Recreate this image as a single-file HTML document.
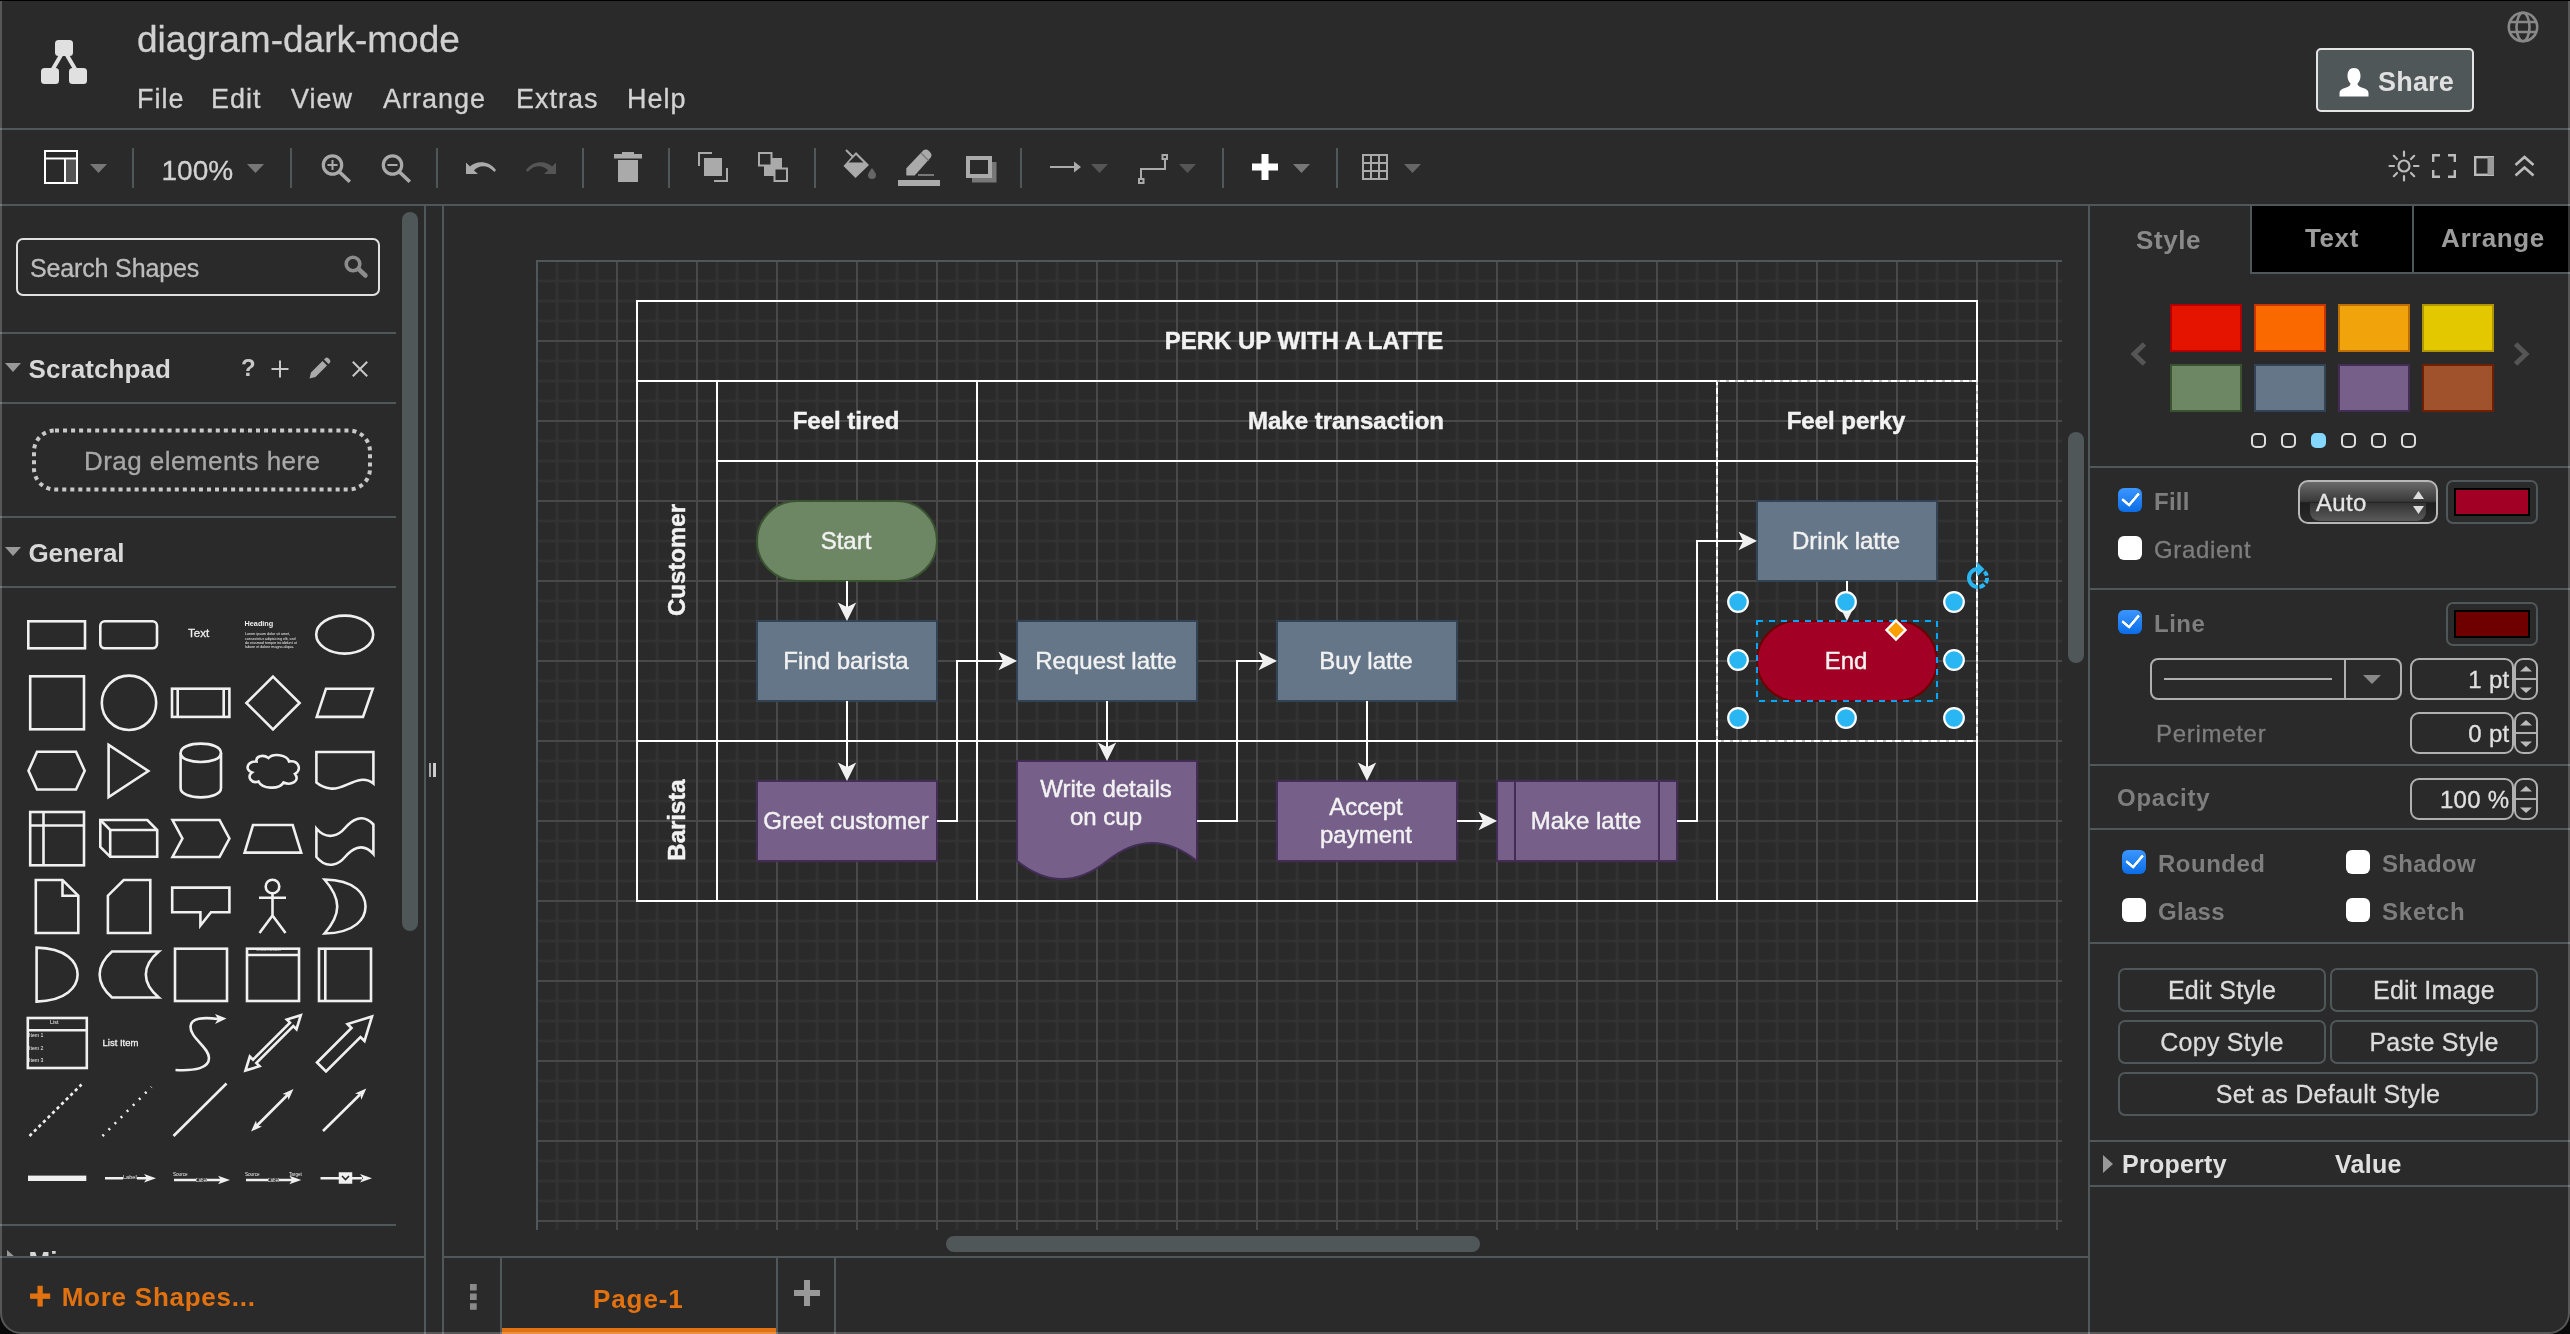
<!DOCTYPE html>
<html lang="en">
<head>
<meta charset="utf-8">
<title>diagram-dark-mode</title>
<style>
*{box-sizing:border-box;margin:0;padding:0}
html,body{width:2570px;height:1334px;overflow:hidden;background:#2a2a2a}
body{font-family:"Liberation Sans",sans-serif;color:#cfcfcf;position:relative;-webkit-text-stroke:.3px}
#root{will-change:transform;position:absolute;left:0;top:0;width:2570px;height:1334px;background:#2a2a2a;overflow:hidden}
.abs{position:absolute}
.hl{position:absolute;height:2px;background:#505759}
.vl{position:absolute;width:2px;background:#505759}
.t{position:absolute;white-space:nowrap;line-height:1}
.tiny{-webkit-text-stroke:0}
.menu{font-size:27px;color:#d2d2d2;top:85.5px;letter-spacing:1px}
.sep{position:absolute;width:2px;top:148px;height:40px;background:#505759}
svg{position:absolute;overflow:visible}

.cb{position:absolute;width:24px;height:24px;border-radius:6px;background:#fff}
.cb.on{background:linear-gradient(#3c96ff,#0a6de6)}
.cb.on:after{content:"";position:absolute;left:4px;top:4px;width:13.5px;height:7.5px;border-left:3.6px solid #fff;border-bottom:3.6px solid #fff;transform:rotate(-50deg);transform-origin:50% 50%;border-radius:1.5px}
.fl{position:absolute;white-space:nowrap;line-height:1;font-size:24px;color:#7e7e7e}
.fb{font-weight:bold;-webkit-text-stroke:0}
.btn{position:absolute;height:44px;border:2px solid #505759;border-radius:7px;color:#dcdcdc;font-size:25px;line-height:40px;text-align:center;letter-spacing:.25px}
.inp{position:absolute;left:2410px;width:104px;height:42px;border:2px solid #b0b0b0;border-radius:9px;color:#e0e0e0;font-size:24px;line-height:40px;text-align:right;padding-right:2.5px;white-space:nowrap;letter-spacing:.3px}
.spin{position:absolute;left:2514px;width:24px;height:42px;border:2px solid #b0b0b0;border-radius:9px}
.spin:before{content:"";position:absolute;left:0;top:18px;width:20px;height:2px;background:#b0b0b0}
.sw{position:absolute;width:72px;height:48px;border:2px solid}
.colbtn{position:absolute;left:2446px;width:92px;height:44px;border:2px solid #505759;border-radius:7px}
.colbtn i{position:absolute;left:6px;top:6px;width:76px;height:28px;border:2px solid #000}
.dot{position:absolute;top:433px;width:15px;height:15px;border:2px solid #ddd;border-radius:5px}

</style>
</head>
<body>
<div id="root">
<!-- window edges -->
<div class="abs" style="left:0;top:0;width:2570px;height:1px;background:#000"></div>

<!-- HEADER -->
<div id="header">
<div class="t" style="left:137px;top:21px;font-size:37px;color:#d0d0d0">diagram-dark-mode</div>
<div class="t menu" style="left:137px">File</div>
<div class="t menu" style="left:211px">Edit</div>
<div class="t menu" style="left:291px">View</div>
<div class="t menu" style="left:383px">Arrange</div>
<div class="t menu" style="left:516px">Extras</div>
<div class="t menu" style="left:627px">Help</div>

<!-- logo -->
<svg style="left:40px;top:40px" width="48" height="44" viewBox="0 0 48 44"><path d="M24 10L10 34M24 10L38 34" stroke="#e0e0e0" stroke-width="4"/><rect x="15" y="0" width="18" height="16" rx="3.5" fill="#e0e0e0"/><rect x="1" y="28" width="18" height="16" rx="3.5" fill="#e0e0e0"/><rect x="29" y="28" width="18" height="16" rx="3.5" fill="#e0e0e0"/></svg>
<!-- globe -->
<svg style="left:2507px;top:11px" width="32" height="32" viewBox="0 0 32 32"><g fill="none" stroke="#888" stroke-width="2.6"><circle cx="16" cy="16" r="14.2"/><ellipse cx="16" cy="16" rx="6.5" ry="14.2"/><path d="M2 11H30M2 21H30"/></g></svg>
<!-- share -->
<div class="abs" style="left:2316px;top:48px;width:158px;height:64px;background:#505759;border:2px solid #e4e4e4;border-radius:5px"></div>
<svg style="left:2339px;top:67px" width="30" height="30" viewBox="0 0 30 30"><path d="M15 1C19.5 1 21.5 4.5 21.5 9C21.5 12.5 20 15 18.5 16.5C18.5 19 21 20 24 21C27.5 22 29.5 23.5 29.5 26V29.5H0.5V26C0.5 23.5 2.5 22 6 21C9 20 11.5 19 11.5 16.5C10 15 8.5 12.5 8.5 9C8.5 4.5 10.5 1 15 1Z" fill="#fff"/></svg>
<div class="t" style="left:2378px;top:69px;font-size:27px;font-weight:bold;-webkit-text-stroke:0;color:#e0e0e0;letter-spacing:.2px">Share</div>

</div>
<div class="hl" style="left:0;top:128px;width:2570px"></div>

<!-- TOOLBAR -->
<div id="toolbar">

<!-- sidebar/format toggle icon -->
<svg style="left:44px;top:150px" width="34" height="34" viewBox="0 0 34 34"><rect x="1" y="1" width="32" height="32" fill="none" stroke="#fff" stroke-width="2"/><rect x="22" y="9" width="10" height="23" fill="#555"/><path d="M1 8.5H33M21 8.5V33" stroke="#fff" stroke-width="2" fill="none"/></svg>
<svg style="left:90px;top:164px" width="17" height="9" viewBox="0 0 17 9"><path d="M0 0H17L8.5 9Z" fill="#777"/></svg>
<div class="sep" style="left:132px"></div>
<div class="t" style="left:161.5px;top:157px;font-size:28px;color:#d2d2d2">100%</div>
<svg style="left:247px;top:164px" width="17" height="9" viewBox="0 0 17 9"><path d="M0 0H17L8.5 9Z" fill="#777"/></svg>
<div class="sep" style="left:290px"></div>
<!-- zoom in -->
<svg style="left:321px;top:153px" width="30" height="30" viewBox="0 0 30 30"><circle cx="11.5" cy="12" r="9.2" fill="none" stroke="#aaa" stroke-width="3.2"/><path d="M18.5 19L27.5 27.5" stroke="#aaa" stroke-width="3.6" stroke-linecap="square"/><path d="M6.5 12H16.5M11.5 7V17" stroke="#aaa" stroke-width="2"/></svg>
<!-- zoom out -->
<svg style="left:381px;top:153px" width="30" height="30" viewBox="0 0 30 30"><circle cx="11.5" cy="12" r="9.2" fill="none" stroke="#aaa" stroke-width="3.2"/><path d="M18.5 19L27.5 27.5" stroke="#aaa" stroke-width="3.6" stroke-linecap="square"/><path d="M6.5 12H16.5" stroke="#aaa" stroke-width="2"/></svg>
<div class="sep" style="left:436px"></div>
<!-- undo -->
<svg style="left:466px;top:160px" width="30" height="15" viewBox="0 0 30 15"><path d="M0 2.5V14H12L8 10.5C12 5.5 21 3.5 28.5 12L30 10C23 0 9.5 0.5 4 6.5Z" fill="#aaa"/></svg>
<!-- redo -->
<svg style="left:526px;top:160px" width="30" height="15" viewBox="0 0 30 15"><path d="M30 2.5V14H18L22 10.5C18 5.5 9 3.5 1.5 12L0 10C7 0 20.5 0.5 26 6.5Z" fill="#555"/></svg>
<div class="sep" style="left:582px"></div>
<!-- delete -->
<svg style="left:614px;top:152px" width="28" height="30" viewBox="0 0 28 30"><path d="M8 0H20V2H28V6.5H0V2H8ZM4 8H24V30H4Z" fill="#aaa"/></svg>
<div class="sep" style="left:668px"></div>
<!-- to front -->
<svg style="left:698px;top:152px" width="30" height="30" viewBox="0 0 30 30"><rect x="6" y="6" width="18" height="18" fill="#aaa"/><path d="M14 1H1V14M16 29H29V16" fill="none" stroke="#aaa" stroke-width="2"/></svg>
<!-- to back -->
<svg style="left:758px;top:152px" width="30" height="30" viewBox="0 0 30 30"><rect x="6" y="6" width="18" height="18" fill="#aaa"/><rect x="1" y="1" width="12.5" height="12.5" fill="#2a2a2a" stroke="#aaa" stroke-width="2"/><rect x="16.5" y="16.5" width="12.5" height="12.5" fill="#2a2a2a" stroke="#aaa" stroke-width="2"/></svg>
<div class="sep" style="left:814px"></div>
<!-- fill color -->
<svg style="left:843px;top:149px" width="34" height="30" viewBox="0 0 34 30"><path d="M3 1L15 13" stroke="#aaa" stroke-width="2"/><path d="M13 3L26 16L12.5 29L0.5 17Z" fill="#aaa"/><path d="M13 6L20.5 13.5H5.5Z" fill="#2a2a2a"/><path d="M29 19C31 22 33 24 33 26A4 4 0 0 1 25 26C25 24 27 22 29 19Z" fill="#666"/></svg>
<!-- line color -->
<svg style="left:898px;top:149px" width="42" height="38" viewBox="0 0 42 38"><path d="M8.3 19.2L25.2 1.6Q28 -0.6 31 2Q35 5.5 32.7 8.6L16.7 26.4H8.3Z" fill="#aaa"/><path d="M23 4L30.5 11.5" stroke="#777" stroke-width="1.2"/><path d="M20 26H36" stroke="#777" stroke-width="2"/><rect x="0" y="31" width="42" height="6" fill="#aaa"/></svg>
<!-- shadow -->
<svg style="left:966px;top:156px" width="31" height="27" viewBox="0 0 31 27"><rect x="6" y="6" width="24.5" height="20.5" fill="#777"/><rect x="2" y="2" width="22" height="18" fill="#2a2a2a" stroke="#aaa" stroke-width="4"/></svg>
<div class="sep" style="left:1020px"></div>
<!-- connection -->
<svg style="left:1050px;top:161px" width="31" height="12" viewBox="0 0 31 12"><path d="M0 6H26" stroke="#aaa" stroke-width="2"/><path d="M24 0.5L31 6L24 11.5Z" fill="#aaa"/></svg>
<svg style="left:1091px;top:164px" width="17" height="9" viewBox="0 0 17 9"><path d="M0 0H17L8.5 9Z" fill="#555"/></svg>
<!-- waypoints -->
<svg style="left:1138px;top:154px" width="30" height="30" viewBox="0 0 30 30"><path d="M3 24V15H27V6" fill="none" stroke="#aaa" stroke-width="2"/><rect x="1" y="25" width="4.5" height="4" fill="#2a2a2a" stroke="#aaa" stroke-width="2"/><rect x="24.5" y="1" width="4.5" height="4" fill="#2a2a2a" stroke="#aaa" stroke-width="2"/></svg>
<svg style="left:1179px;top:164px" width="17" height="9" viewBox="0 0 17 9"><path d="M0 0H17L8.5 9Z" fill="#555"/></svg>
<div class="sep" style="left:1222px"></div>
<!-- insert -->
<svg style="left:1252px;top:154px" width="26" height="26" viewBox="0 0 26 26"><path d="M9.5 0H16.5V9.5H26V16.5H16.5V26H9.5V16.5H0V9.5H9.5Z" fill="#fff"/></svg>
<svg style="left:1293px;top:164px" width="17" height="9" viewBox="0 0 17 9"><path d="M0 0H17L8.5 9Z" fill="#777"/></svg>
<div class="sep" style="left:1336px"></div>
<!-- table -->
<svg style="left:1362px;top:154px" width="26" height="26" viewBox="0 0 26 26"><path d="M1 1H25V25H1ZM1 9H25M1 17H25M9 1V25M17 1V25" fill="none" stroke="#aaa" stroke-width="2"/></svg>
<svg style="left:1404px;top:164px" width="17" height="9" viewBox="0 0 17 9"><path d="M0 0H17L8.5 9Z" fill="#666"/></svg>
<!-- right icons -->
<svg style="left:2389px;top:151px" width="30" height="30" viewBox="0 0 30 30"><circle cx="15" cy="15" r="5.5" fill="none" stroke="#bbb" stroke-width="2.2"/><path d="M15 0.5V5M15 25V29.5M0.5 15H5M25 15H29.5M4.8 4.8L8 8M22 22L25.2 25.2M4.8 25.2L8 22M22 8L25.2 4.8" stroke="#bbb" stroke-width="2.2" stroke-linecap="round"/></svg>
<svg style="left:2432px;top:154px" width="24" height="24" viewBox="0 0 24 24"><path d="M1.2 8V1.2H8M16 1.2H22.8V8M22.8 16V22.8H16M8 22.8H1.2V16" fill="none" stroke="#bbb" stroke-width="2.4"/></svg>
<svg style="left:2474px;top:156px" width="20" height="20" viewBox="0 0 20 20"><rect x="1.2" y="1.2" width="17.6" height="17.6" fill="none" stroke="#bbb" stroke-width="2.4"/><rect x="13.5" y="1" width="6.5" height="18" fill="#999"/></svg>
<svg style="left:2514px;top:155px" width="21" height="22" viewBox="0 0 21 22"><path d="M1.5 10L10.5 2L19.5 10M1.5 20.5L10.5 12.5L19.5 20.5" fill="none" stroke="#bbb" stroke-width="2.6"/></svg>

</div>
<div class="hl" style="left:0;top:204px;width:2570px"></div>

<!-- LEFT SIDEBAR -->
<div id="sidebar">

<div class="abs" style="left:16px;top:238px;width:364px;height:58px;border:2px solid #e0e0e0;border-radius:7px"></div>
<div class="t" style="left:30px;top:255.5px;font-size:25px;color:#bdbdbd;letter-spacing:-.15px">Search Shapes</div>
<svg style="left:344px;top:255px" width="24" height="23" viewBox="0 0 24 23"><circle cx="9" cy="9" r="6.8" fill="none" stroke="#8c8c8c" stroke-width="3.6"/><path d="M14.5 14L21.5 20.5" stroke="#8c8c8c" stroke-width="4.5" stroke-linecap="round"/></svg>
<div class="hl" style="left:0;top:332px;width:396px"></div>
<svg style="left:5px;top:363px" width="16" height="9" viewBox="0 0 16 9"><path d="M0 0H16L8 9Z" fill="#999"/></svg>
<div class="t" style="left:28.5px;top:356px;font-size:26px;font-weight:bold;-webkit-text-stroke:0;color:#d8d8d8;letter-spacing:.1px">Scratchpad</div>
<div class="t" style="left:241px;top:356px;font-size:24px;font-weight:bold;-webkit-text-stroke:0;color:#c8c8c8">?</div>
<svg style="left:271px;top:360px" width="18" height="18" viewBox="0 0 18 18"><path d="M9 0.5V17.5M0.5 9H17.5" stroke="#c8c8c8" stroke-width="2"/></svg>
<svg style="left:308px;top:357px" width="23" height="23" viewBox="0 0 23 23"><path d="M1.5 21.5L3 15.5L14.5 4L19 8.5L7.5 20Z" fill="#aaa"/><path d="M16 2.5L17.5 1Q19 0 20.3 1.2L21.8 2.7Q23 4 22 5.5L20.5 7Z" fill="#aaa"/></svg>
<svg style="left:352px;top:361px" width="16" height="16" viewBox="0 0 16 16"><path d="M0.8 0.8L15.2 15.2M15.2 0.8L0.8 15.2" stroke="#c8c8c8" stroke-width="2"/></svg>
<div class="hl" style="left:0;top:402px;width:396px"></div>
<svg style="left:32px;top:428px" width="340" height="64" viewBox="0 0 340 64"><rect x="2" y="2.5" width="336" height="59" rx="21" fill="none" stroke="#c8c8c8" stroke-width="4" stroke-dasharray="4 4.04"/></svg>
<div class="t" style="left:83.9px;top:448px;font-size:26px;color:#a8a8a8;letter-spacing:.46px">Drag elements here</div>
<div class="hl" style="left:0;top:516px;width:396px"></div>
<svg style="left:5px;top:547px" width="16" height="9" viewBox="0 0 16 9"><path d="M0 0H16L8 9Z" fill="#999"/></svg>
<div class="t" style="left:28.5px;top:540px;font-size:26px;font-weight:bold;-webkit-text-stroke:0;color:#d8d8d8;letter-spacing:-.15px">General</div>
<div class="hl" style="left:0;top:586px;width:396px"></div>
<div class="abs" style="left:402px;top:212px;width:16px;height:719px;border-radius:8px;background:#505759"></div>
<svg style="left:0;top:0" width="424" height="1256" viewBox="0 0 424 1256"><g fill="none" stroke="#f0f0f0" stroke-width="2.6" stroke-linejoin="miter"><rect x="28.3" y="621.3" width="56.7" height="27" /><rect x="100.3" y="621.3" width="56.7" height="27" rx="4.5"/><ellipse cx="344.7" cy="634.6" rx="28.5" ry="19"/><rect x="30.2" y="676.3" width="53.8" height="53"/><circle cx="129" cy="702.8" r="27.2"/><rect x="172" y="688.7" width="57.4" height="28.2"/><path d="M177.7 688.7V717M223.7 688.7V717"/><path d="M273 676.6L299.6 703L273 729.4L246.4 703Z"/><path d="M326 688.7H372.8L363 716.9H316.7Z"/><path d="M37 751.8H76L84.7 770.8L76 789.5H37L28.5 770.8Z"/><path d="M108.6 744.8L148.3 771L108.6 797Z"/><path d="M180.6 753C180.6 740.5 221 740.5 221 753V788C221 800.5 180.6 800.5 180.6 788Z"/><path d="M180.6 753C180.6 765 221 765 221 753"/><path d="M256.5 761.5C247 761 244.5 770 252 772.5C246 777 252 784 258.5 781.5C262 789 279 790 283.5 782.5C291 786 300.5 781 295 774C302 770 299 760 289 761.5C287 754.5 273 753 268.5 758C263 754 255.5 756 256.5 761.5Z"/><path d="M316.4 752H373.4V783.5C359 772 344 791 330.5 788.5C324 787.5 320 785.5 316.4 782.5Z"/><rect x="30.2" y="812" width="53.8" height="53.3"/><path d="M30.2 825.5H84M43.5 812V865.3"/><path d="M100.3 820H147.3L157.2 830V856.8H110.2L100.3 847Z"/><path d="M100.3 820L110.2 830H157.2M110.2 830V856.8"/><path d="M172.5 820H219.5L229.4 838.5L219.5 857H172.5L182.4 838.5Z"/><path d="M253 825H292.7L301.2 852.6H244.6Z"/><path d="M316.4 828.5C328 842 340 834 345 828C351 821 362 812 373.4 824.5V854C362 841 351 850 345 857C340 863 328 871 316.4 857Z"/><path d="M35.8 880H62.5L78.3 895.7V933H35.8Z"/><path d="M62.5 880V895.7H78.3"/><path d="M123.7 880H150.3V933H107.9V895.7Z"/><path d="M172.2 887.6H229.4V912.2H211L200.4 925.5V912.2H172.2Z"/><circle cx="272.5" cy="886.5" r="6.8"/><path d="M272.5 893.3V915.5M259 897.8H286M272.5 915.5L259.5 933M272.5 915.5L285.5 933"/><path d="M324.5 879.5C356 880 365.5 895 365.5 906.5C365.5 918 356 933 324.5 933.5C341.5 914 341.5 899 324.5 879.5Z"/><path d="M36.6 947.6C66 948 77.6 962 77.6 974.6C77.6 987 66 1001 36.6 1001.6Z"/><path d="M112 951.5H158.8C141.5 966 141.5 983 158.8 997.5H112C95.5 983 95.5 966 112 951.5Z"/><rect x="175" y="948.7" width="52" height="52.3"/><rect x="247" y="948.7" width="52" height="52.3"/><path d="M247 955H299"/><rect x="319" y="948.7" width="52" height="52.3"/><path d="M325.3 948.7V1001"/><rect x="27.8" y="1018" width="59" height="50"/><path d="M27.8 1030.3H86.8"/><path d="M175.5 1070C196 1071 209 1068 209 1058C209 1047 190 1038 190.5 1026.5C191 1018 203 1017 218 1019" /><path d="M245.5 1070.5L249.8 1056.5L253 1059.7L290 1022.7L286.8 1019.5L300.8 1015.2L296.5 1029.2L293.3 1026L256.3 1063L259.5 1066.2Z"/><path d="M317 1062.5L351.5 1028L347.5 1024L372 1016.5L364.5 1041L360.5 1037L326 1071.5Z"/><path d="M29.5 1136L81.5 1084.5" stroke-dasharray="3.2 3.2"/><path d="M102.5 1136L151.5 1087" stroke-dasharray="2 6.6"/><path d="M173.5 1136L226.5 1083.5"/><path d="M256.5 1126L288 1094.5"/><path d="M323 1131L360 1094.5"/><path d="M105 1178.3H148"/><path d="M174 1180H222"/><path d="M246 1180H294"/><path d="M320.5 1178.3H362"/></g><g fill="#f0f0f0" stroke="none"><path d="M226.5 1018.5L215 1014L218 1019L215 1024Z"/><path d="M293.5 1089L282.5 1094L287.5 1095L288.5 1100Z"/><path d="M251 1131.5L262 1126.5L257 1125.5L256 1120.5Z"/><path d="M366.3 1088.5L355 1093.5L360.3 1094.5L361.3 1099.8Z"/><rect x="28" y="1175.6" width="58.3" height="5.4"/><path d="M156 1178.3L144 1174L147 1178.3L144 1182.6Z"/><path d="M230 1180L218 1175.7L221 1180L218 1184.3Z"/><path d="M301.3 1180L289.3 1175.7L292.3 1180L289.3 1184.3Z"/><path d="M372 1178.3L360 1174L363 1178.3L360 1182.6Z"/><rect x="339.5" y="1173" width="12" height="10" stroke="#f0f0f0" stroke-width="1.5"/></g><path d="M342 1176L345.5 1179.5L349 1176" fill="none" stroke="#2a2a2a" stroke-width="1.6"/></svg>
<div class="t" style="left:188px;top:628px;font-size:11.5px;color:#f0f0f0">Text</div>
<div class="t" style="left:244.5px;top:620px;font-size:7.3px;-webkit-text-stroke:0;font-weight:bold;-webkit-text-stroke:0;color:#f0f0f0">Heading</div>
<div class="abs" style="left:244.5px;top:632px;transform-origin:0 0;transform:scale(.25);font-size:14.6px;-webkit-text-stroke:0;line-height:17.2px;color:#f0f0f0;white-space:nowrap">Lorem ipsum dolor sit amet,<br>consectetur adipisicing elit, sed<br>do eiusmod tempor incididunt ut<br>labore et dolore magna aliqua.</div>
<div class="t" style="left:50px;top:1019.5px;font-size:5.5px;-webkit-text-stroke:0;color:#f0f0f0">List</div>
<div class="t" style="left:29px;top:1033px;font-size:5.2px;-webkit-text-stroke:0;color:#f0f0f0">Item 1</div>
<div class="t" style="left:29px;top:1045.5px;font-size:5.2px;-webkit-text-stroke:0;color:#f0f0f0">Item 2</div>
<div class="t" style="left:29px;top:1058px;font-size:5.2px;-webkit-text-stroke:0;color:#f0f0f0">Item 3</div>
<div class="t" style="left:102.5px;top:1038px;font-size:9.5px;color:#f0f0f0">List Item</div>
<div class="t" style="left:123px;top:1174.5px;font-size:5.6px;-webkit-text-stroke:0;color:#f0f0f0;background:#2a2a2a">Label</div>
<div class="t" style="left:173px;top:1173px;font-size:4.6px;-webkit-text-stroke:0;color:#f0f0f0">Source</div>
<div class="t" style="left:196px;top:1178.5px;font-size:4.6px;-webkit-text-stroke:0;color:#f0f0f0;background:#2a2a2a">Label</div>
<div class="t" style="left:245px;top:1173px;font-size:4.6px;-webkit-text-stroke:0;color:#f0f0f0">Source</div>
<div class="t" style="left:268px;top:1178.5px;font-size:4.6px;-webkit-text-stroke:0;color:#f0f0f0;background:#2a2a2a">Label</div>
<div class="t" style="left:289px;top:1173px;font-size:4.6px;-webkit-text-stroke:0;color:#f0f0f0">Target</div>
<div class="t" style="left:256px;top:949px;font-size:3.2px;-webkit-text-stroke:0;color:#f0f0f0">Vertical Container</div>
<div class="hl" style="left:0;top:1224px;width:396px"></div>
<svg style="left:7px;top:1249.5px" width="9" height="8" viewBox="0 0 9 8"><path d="M0 0L9 8H0Z" fill="#999"/></svg>
<div class="t" style="left:28.5px;top:1247.5px;font-size:26px;font-weight:bold;-webkit-text-stroke:0;color:#d8d8d8;letter-spacing:.2px">Misc</div>
<div class="abs" style="left:2px;top:1256px;width:422px;height:78px;background:#2a2a2a"></div>
<div class="hl" style="left:0;top:1256px;width:424px"></div>
<div class="t" style="left:29px;top:1283.5px;font-size:26px;font-weight:bold;-webkit-text-stroke:0;color:#e2720f;letter-spacing:.75px"><span style="font-size:38px;line-height:0;position:relative;top:3px;margin-right:10.5px;letter-spacing:0;-webkit-text-stroke:1px #e2720f">+</span>More Shapes...</div>

</div>
<div class="vl" style="left:424px;top:206px;height:1128px"></div>
<div class="vl" style="left:442px;top:206px;height:1128px"></div>

<!-- CANVAS -->
<div id="canvas">

<div class="abs" style="left:444px;top:206px;width:1644px;height:1050px;overflow:hidden;background:#2a2a2a">
<svg style="left:-444px;top:-206px" width="2570" height="1334" viewBox="0 0 2570 1334" font-family="Liberation Sans, sans-serif">
<defs><pattern id="grid" x="537" y="261" width="80" height="80" patternUnits="userSpaceOnUse">
<path d="M20 0V80M40 0V80M60 0V80M0 20H80M0 40H80M0 60H80" stroke="#2e2e2e" stroke-width="3.4" fill="none"/>
<path d="M20 0V80M40 0V80M60 0V80M0 20H80M0 40H80M0 60H80" stroke="#333" stroke-width="1.4" fill="none"/>
<path d="M0 0V80M80 0V80M0 0H80M0 80H80" stroke="#494949" stroke-width="2" fill="none"/>
</pattern></defs>
<rect x="538" y="262" width="1524" height="968" fill="url(#grid)"/>
<path d="M537 1230V261H2062" fill="none" stroke="#505759" stroke-width="2"/>
<!-- swimlanes -->
<g fill="none" stroke="#fff" stroke-width="2">
<rect x="637" y="301" width="1340" height="600"/>
<path d="M637 381H1977M717 381V901M717 461H1977M977 381V901M1717 381V901M637 741H1977"/>
</g>
<path d="M1717 381H1977V741H1717Z" fill="none" stroke="#c4c4c4" stroke-width="2" stroke-dasharray="3 6"/>
<!-- shapes -->
<g stroke-width="2">
<rect x="757" y="501" width="180" height="80" rx="40" fill="#6d8764" stroke="#3a5431"/>
<g fill="#647687" stroke="#314354">
<rect x="757" y="621" width="180" height="80"/><rect x="1017" y="621" width="180" height="80"/><rect x="1277" y="621" width="180" height="80"/><rect x="1757" y="501" width="180" height="80"/>
</g>
<g fill="#76608a" stroke="#432d57">
<rect x="757" y="781" width="180" height="80"/>
<path d="M1017 761H1197V861Q1152 825 1107 861Q1062 897 1017 861Z"/>
<rect x="1277" y="781" width="180" height="80"/>
<rect x="1497" y="781" width="180" height="80"/><path d="M1515 781V861M1659 781V861" fill="none"/>
</g>
<rect x="1757" y="621" width="180" height="80" rx="40" fill="#a20025" stroke="#6f0000"/>
</g>
<!-- edges -->
<g fill="none" stroke="#fff" stroke-width="2" stroke-linejoin="miter"><path d="M847 581L847 608.26"/><path d="M847 701L847 768.26"/><path d="M937 821L957 821L957 661L1004.26 661"/><path d="M1107 701L1107 748.26"/><path d="M1197 821L1237 821L1237 661L1264.26 661"/><path d="M1367 701L1367 768.26"/><path d="M1457 821L1484.26 821"/><path d="M1677 821L1697 821L1697 541L1744.26 541"/><path d="M1847 581L1847 608.26"/></g>
<g fill="#f0f0f0" stroke="#f0f0f0" stroke-width="2" stroke-linejoin="miter" stroke-miterlimit="10"><path d="M847 618.76L840 604.76L847 608.26L854 604.76Z"/><path d="M847 778.76L840 764.76L847 768.26L854 764.76Z"/><path d="M1014.76 661L1000.76 654L1004.26 661L1000.76 668Z"/><path d="M1107 758.76L1100 744.76L1107 748.26L1114 744.76Z"/><path d="M1274.76 661L1260.76 654L1264.26 661L1260.76 668Z"/><path d="M1367 778.76L1360 764.76L1367 768.26L1374 764.76Z"/><path d="M1494.76 821L1480.76 814L1484.26 821L1480.76 828Z"/><path d="M1754.76 541L1740.76 534L1744.26 541L1740.76 548Z"/><path d="M1847 618.76L1840 604.76L1847 608.26L1854 604.76Z"/></g>
<g fill="#f2f2f2" stroke="#f2f2f2" stroke-width=".45" font-size="24"><text x="1304" y="349.0" text-anchor="middle" font-weight="bold">PERK UP WITH A LATTE</text><text x="846" y="429.0" text-anchor="middle" font-weight="bold">Feel tired</text><text x="1346" y="429.0" text-anchor="middle" font-weight="bold">Make transaction</text><text x="1846" y="429.0" text-anchor="middle" font-weight="bold">Feel perky</text><text transform="translate(684.5,560) rotate(-90)" text-anchor="middle" font-weight="bold">Customer</text><text transform="translate(684.5,820) rotate(-90)" text-anchor="middle" font-weight="bold">Barista</text><text x="846" y="549.0" text-anchor="middle">Start</text><text x="846" y="669.0" text-anchor="middle">Find barista</text><text x="1106" y="669.0" text-anchor="middle">Request latte</text><text x="1366" y="669.0" text-anchor="middle">Buy latte</text><text x="1846" y="549.0" text-anchor="middle">Drink latte</text><text x="1846" y="669.0" text-anchor="middle">End</text><text x="846" y="829.0" text-anchor="middle">Greet customer</text><text x="1106" y="797.0" text-anchor="middle">Write details</text><text x="1106" y="825.0" text-anchor="middle">on cup</text><text x="1366" y="815.0" text-anchor="middle">Accept</text><text x="1366" y="843.0" text-anchor="middle">payment</text><text x="1586" y="829.0" text-anchor="middle">Make latte</text></g>
<!-- selection -->
<rect x="1757" y="621" width="180" height="80" fill="none" stroke="#00a8ff" stroke-width="2" stroke-dasharray="6 6"/>
<g fill="#29b6f2" stroke="#fff" stroke-width="2.2"><circle cx="1738" cy="602" r="9.8"/><circle cx="1846" cy="602" r="9.8"/><circle cx="1954" cy="602" r="9.8"/><circle cx="1738" cy="660" r="9.8"/><circle cx="1954" cy="660" r="9.8"/><circle cx="1738" cy="718" r="9.8"/><circle cx="1846" cy="718" r="9.8"/><circle cx="1954" cy="718" r="9.8"/></g>
<path d="M1896 620.5L1905.5 630L1896 639.5L1886.5 630Z" fill="#fca000" stroke="#fff" stroke-width="2.4"/>
<g transform="translate(1978,578)"><path d="M0 -9A9 9 0 0 0 0 9" fill="none" stroke="#29b6f2" stroke-width="4"/><path d="M0 9A9 9 0 0 0 6.4 -6.4" fill="none" stroke="#29b6f2" stroke-width="4" stroke-dasharray="5.4 2" stroke-dashoffset="-1.4"/><path d="M-1 -16L6.5 -8.7L-1 -1.2Z" fill="#29b6f2"/></g>
<!-- scrollbars -->
<rect x="2068" y="432" width="16" height="231" rx="8" fill="#505759"/>
<rect x="946" y="1236" width="534" height="16" rx="8" fill="#505759"/>
</svg>
</div>
<div class="abs" style="left:429px;top:763px;width:2px;height:14px;background:#aaa"></div>
<div class="abs" style="left:433px;top:763px;width:3px;height:14px;background:#ccc"></div>

</div>

<!-- FOOTER -->
<div id="footer">

<div class="abs" style="left:444px;top:1258px;width:1644px;height:76px;background:#2a2a2a"></div>
<div class="hl" style="left:444px;top:1256px;width:1644px"></div>
<svg style="left:469.5px;top:1284.4px" width="7" height="26" viewBox="0 0 7 26"><path d="M0 0H6.7V6.6H0ZM0 9.4H6.7V16H0ZM0 19.2H6.7V25.8H0Z" fill="#8a8a8a"/></svg>
<div class="vl" style="left:500px;top:1258px;height:76px"></div>
<div class="t" style="left:593px;top:1286px;font-size:26px;font-weight:bold;-webkit-text-stroke:0;color:#e2720f;letter-spacing:.9px">Page-1</div>
<div class="abs" style="left:502px;top:1328px;width:274px;height:6px;background:#e2720f"></div>
<div class="vl" style="left:776px;top:1258px;height:76px"></div>
<svg style="left:794px;top:1280px" width="26" height="26" viewBox="0 0 26 26"><path d="M10 0H16V10H26V16H16V26H10V16H0V10H10Z" fill="#999"/></svg>
<div class="vl" style="left:834px;top:1258px;height:76px"></div>

</div>

<!-- RIGHT PANEL -->
<div id="format">

<div class="abs" style="left:2090px;top:206px;width:477px;height:1128px;background:#2a2a2a"></div>
<div class="vl" style="left:2088px;top:206px;height:1128px"></div>
<!-- tabs -->
<div class="abs" style="left:2250px;top:206px;width:320px;height:68px;background:#000;border-left:2px solid #505759;border-bottom:2px solid #505759"></div>
<div class="vl" style="left:2412px;top:206px;height:66px"></div>
<div class="fl fb" style="left:2136px;top:227px;color:#8a8a8a;letter-spacing:.6px;font-size:26px">Style</div>
<div class="fl fb" style="left:2305px;top:225px;color:#9c9c9c;letter-spacing:.6px;font-size:26px">Text</div>
<div class="fl fb" style="left:2441px;top:225px;color:#9c9c9c;letter-spacing:.6px;font-size:26px">Arrange</div>
<!-- swatches -->
<div class="sw" style="left:2170px;top:304px;background:#e51400;border-color:#b20000"></div>
<div class="sw" style="left:2254px;top:304px;background:#fa6800;border-color:#c73500"></div>
<div class="sw" style="left:2338px;top:304px;background:#f0a30a;border-color:#bd7000"></div>
<div class="sw" style="left:2422px;top:304px;background:#e3c800;border-color:#b09500"></div>
<div class="sw" style="left:2170px;top:364px;background:#6d8764;border-color:#3a5431"></div>
<div class="sw" style="left:2254px;top:364px;background:#647687;border-color:#314354"></div>
<div class="sw" style="left:2338px;top:364px;background:#76608a;border-color:#432d57"></div>
<div class="sw" style="left:2422px;top:364px;background:#a0522d;border-color:#6d1f00"></div>
<svg style="left:2130px;top:342px" width="17" height="24" viewBox="0 0 17 24"><path d="M14.5 2L4 12L14.5 22" fill="none" stroke="#555" stroke-width="5"/></svg>
<svg style="left:2513px;top:342px" width="17" height="24" viewBox="0 0 17 24"><path d="M2.5 2L13 12L2.5 22" fill="none" stroke="#555" stroke-width="5"/></svg>
<div class="dot" style="left:2250.5px"></div><div class="dot" style="left:2280.5px"></div><div class="dot" style="left:2310.5px;background:#84d7ff;border-color:#84d7ff"></div><div class="dot" style="left:2340.5px"></div><div class="dot" style="left:2370.5px"></div><div class="dot" style="left:2400.5px"></div>
<div class="hl" style="left:2090px;top:466px;width:480px"></div>
<!-- fill -->
<div class="cb on" style="left:2118px;top:488px"></div>
<div class="fl fb" style="left:2154px;top:490px;letter-spacing:0.25px">Fill</div>
<div class="abs" style="left:2298px;top:480px;width:140px;height:44px;border:2px solid #b8b8b8;border-radius:10px;background:linear-gradient(#6a6a6a 0%,#3a3a3a 48%,#1e1e1e 52%,#2a2a2a 100%)"></div>
<div class="abs" style="left:2310px;top:503px;width:116px;height:18px;border-radius:0 0 9px 9px;background:linear-gradient(#333,#5a5a5a)"></div>
<div class="t" style="left:2316px;top:490.5px;font-size:24px;color:#e4e4e4;letter-spacing:.3px">Auto</div>
<svg style="left:2413px;top:491px" width="11" height="23" viewBox="0 0 11 23"><path d="M0 8L5.5 0L11 8Z" fill="#ddd"/><path d="M0 15L5.5 23L11 15Z" fill="#ddd"/></svg>
<div class="colbtn" style="top:480px"><i style="background:#a20025"></i></div>
<div class="cb" style="left:2118px;top:536px"></div>
<div class="fl" style="left:2154px;top:538px;letter-spacing:0.65px">Gradient</div>
<div class="hl" style="left:2090px;top:588px;width:480px"></div>
<!-- line -->
<div class="cb on" style="left:2118px;top:610px"></div>
<div class="fl fb" style="left:2154px;top:612px;letter-spacing:0.5px">Line</div>
<div class="colbtn" style="top:602px"><i style="background:#6f0000"></i></div>
<div class="abs" style="left:2150px;top:658px;width:252px;height:42px;border:2px solid #b0b0b0;border-radius:8px"></div>
<div class="abs" style="left:2344px;top:660px;width:2px;height:38px;background:#b0b0b0"></div>
<div class="abs" style="left:2164px;top:678px;width:168px;height:2px;background:#b0b0b0"></div>
<svg style="left:2363px;top:675px" width="18" height="9" viewBox="0 0 18 9"><path d="M0 0H18L9 9Z" fill="#888"/></svg>
<div class="inp" style="top:658px">1 pt</div><div class="spin" style="top:658px"></div><svg style="left:2520px;top:666px" width="12" height="27" viewBox="0 0 12 27"><path d="M0 5.5L6 0L12 5.5Z" fill="#bbb"/><path d="M0 21.5L6 27L12 21.5Z" fill="#bbb"/></svg>
<div class="fl" style="left:2156px;top:722px;letter-spacing:0.7px">Perimeter</div>
<div class="inp" style="top:712px">0 pt</div><div class="spin" style="top:712px"></div><svg style="left:2520px;top:720px" width="12" height="27" viewBox="0 0 12 27"><path d="M0 5.5L6 0L12 5.5Z" fill="#bbb"/><path d="M0 21.5L6 27L12 21.5Z" fill="#bbb"/></svg>
<div class="hl" style="left:2090px;top:764px;width:480px"></div>
<div class="fl fb" style="left:2117px;top:786px;letter-spacing:0.75px">Opacity</div>
<div class="inp" style="top:778px">100 %</div><div class="spin" style="top:778px"></div><svg style="left:2520px;top:786px" width="12" height="27" viewBox="0 0 12 27"><path d="M0 5.5L6 0L12 5.5Z" fill="#bbb"/><path d="M0 21.5L6 27L12 21.5Z" fill="#bbb"/></svg>
<div class="hl" style="left:2090px;top:828px;width:480px"></div>
<div class="cb on" style="left:2122px;top:850px"></div>
<div class="fl fb" style="left:2158px;top:852px;letter-spacing:0.5px">Rounded</div>
<div class="cb" style="left:2346px;top:850px"></div>
<div class="fl fb" style="left:2382px;top:852px;letter-spacing:0.35px">Shadow</div>
<div class="cb" style="left:2122px;top:898px"></div>
<div class="fl fb" style="left:2158px;top:900px;letter-spacing:0.3px">Glass</div>
<div class="cb" style="left:2346px;top:898px"></div>
<div class="fl fb" style="left:2382px;top:900px;letter-spacing:0.8px">Sketch</div>
<div class="hl" style="left:2090px;top:942px;width:480px"></div>
<div class="btn" style="left:2118px;top:968px;width:208px">Edit Style</div>
<div class="btn" style="left:2330px;top:968px;width:208px">Edit Image</div>
<div class="btn" style="left:2118px;top:1020px;width:208px">Copy Style</div>
<div class="btn" style="left:2330px;top:1020px;width:208px">Paste Style</div>
<div class="btn" style="left:2118px;top:1072px;width:420px">Set as Default Style</div>
<div class="hl" style="left:2090px;top:1140px;width:480px"></div>
<svg style="left:2103px;top:1155px" width="10" height="18" viewBox="0 0 10 18"><path d="M0 0L10 9L0 18Z" fill="#999"/></svg>
<div class="fl fb" style="left:2122px;top:1151.5px;color:#e0e0e0;letter-spacing:0.25px;font-size:25px">Property</div>
<div class="fl fb" style="left:2335px;top:1151.5px;color:#e0e0e0;letter-spacing:0.25px;font-size:25px">Value</div>
<div class="hl" style="left:2090px;top:1185px;width:480px"></div>

<!-- window frame -->
<svg style="left:0;top:0;pointer-events:none" width="2570" height="1334" viewBox="0 0 2570 1334">
<path d="M0 1313V1334H21A21 21 0 0 1 0 1313ZM2570 1313V1334H2549A21 21 0 0 0 2570 1313Z" fill="#0a0a0a"/>
<path d="M1 1V1313A20 20 0 0 0 21 1333H2549A20 20 0 0 0 2569 1313V1" fill="none" stroke="#fff" stroke-opacity=".21" stroke-width="2"/>
</svg>

</div>
</div>
</body>
</html>
